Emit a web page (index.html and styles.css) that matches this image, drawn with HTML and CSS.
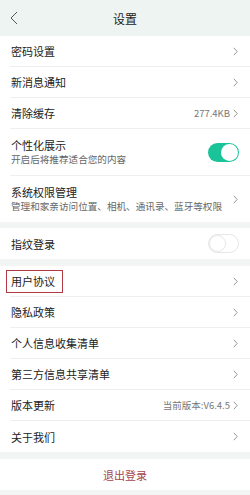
FILE: index.html
```html
<!DOCTYPE html>
<html lang="zh">
<head>
<meta charset="utf-8">
<link rel="stylesheet" href="styles.css">
</head>
<body>
<div class="page">
  <header class="topbar">
    <svg class="back" width="8" height="14" viewBox="0 0 8 14"><path d="M7 1 L1 7 L7 13" fill="none" stroke="#555" stroke-width="1"/></svg>
    <div class="title">设置</div>
  </header>

  <section class="group">
    <div class="row"><span class="label">密码设置</span><svg class="chev" width="5" height="9" viewBox="0 0 5 9"><path d="M0.8 0.8 L4.2 4.5 L0.8 8.2" fill="none" stroke="#8a8a8a" stroke-width="0.9"/></svg></div>
    <div class="row"><span class="label">新消息通知</span><svg class="chev" width="5" height="9" viewBox="0 0 5 9"><path d="M0.8 0.8 L4.2 4.5 L0.8 8.2" fill="none" stroke="#8a8a8a" stroke-width="0.9"/></svg></div>
    <div class="row"><span class="label">清除缓存</span><span class="right"><span class="value">277.4KB</span><svg class="chev" width="5" height="9" viewBox="0 0 5 9"><path d="M0.8 0.8 L4.2 4.5 L0.8 8.2" fill="none" stroke="#8a8a8a" stroke-width="0.9"/></svg></span></div>
    <div class="row tall"><div class="texts"><span class="label">个性化展示</span><span class="sub">开启后将推荐适合您的内容</span></div><span class="toggle on"><span class="knob"></span></span></div>
    <div class="row tall last"><div class="texts"><span class="label">系统权限管理</span><span class="sub">管理和家亲访问位置、相机、通讯录、蓝牙等权限</span></div><svg class="chev" width="5" height="9" viewBox="0 0 5 9"><path d="M0.8 0.8 L4.2 4.5 L0.8 8.2" fill="none" stroke="#8a8a8a" stroke-width="0.9"/></svg></div>
  </section>

  <div class="gap g6"></div>

  <section class="group">
    <div class="row last"><span class="label">指纹登录</span><span class="toggle off"><span class="knob"></span></span></div>
  </section>

  <div class="gap g7"></div>

  <section class="group">
    <div class="row"><span class="label marked">用户协议<span class="mark"></span></span><svg class="chev" width="5" height="9" viewBox="0 0 5 9"><path d="M0.8 0.8 L4.2 4.5 L0.8 8.2" fill="none" stroke="#8a8a8a" stroke-width="0.9"/></svg></div>
    <div class="row"><span class="label">隐私政策</span><svg class="chev" width="5" height="9" viewBox="0 0 5 9"><path d="M0.8 0.8 L4.2 4.5 L0.8 8.2" fill="none" stroke="#8a8a8a" stroke-width="0.9"/></svg></div>
    <div class="row"><span class="label">个人信息收集清单</span><svg class="chev" width="5" height="9" viewBox="0 0 5 9"><path d="M0.8 0.8 L4.2 4.5 L0.8 8.2" fill="none" stroke="#8a8a8a" stroke-width="0.9"/></svg></div>
    <div class="row"><span class="label">第三方信息共享清单</span><svg class="chev" width="5" height="9" viewBox="0 0 5 9"><path d="M0.8 0.8 L4.2 4.5 L0.8 8.2" fill="none" stroke="#8a8a8a" stroke-width="0.9"/></svg></div>
    <div class="row"><span class="label">版本更新</span><span class="right"><span class="value">当前版本:V6.4.5</span><svg class="chev" width="5" height="9" viewBox="0 0 5 9"><path d="M0.8 0.8 L4.2 4.5 L0.8 8.2" fill="none" stroke="#8a8a8a" stroke-width="0.9"/></svg></span></div>
    <div class="row last"><span class="label">关于我们</span><svg class="chev" width="5" height="9" viewBox="0 0 5 9"><path d="M0.8 0.8 L4.2 4.5 L0.8 8.2" fill="none" stroke="#8a8a8a" stroke-width="0.9"/></svg></div>
  </section>

  <div class="gap g7"></div>

  <section class="group">
    <div class="logout">退出登录</div>
  </section>
</div>
</body>
</html>
```

FILE: styles.css
```css
* { box-sizing: border-box; margin: 0; padding: 0; }
html, body { width: 250px; height: 495px; overflow: hidden; }
body {
  background: #f2f5f4;
  font-family: "Noto Sans CJK SC", "Noto Sans", sans-serif;
  color: #222;
}
.page { display: flex; flex-direction: column; }
.topbar {
  height: 36px;
  background: #edf4f2;
  display: flex;
  align-items: center;
  justify-content: center;
  position: relative;
}
.back { position: absolute; left: 10px; top: 11px; }
.title { font-size: 12px; color: #222; }
.group { background: #fff; }
.row {
  height: 31px;
  margin-left: 10px;
  padding-right: 11px;
  padding-left: 1px;
  border-bottom: 1px solid #eeeeee;
  display: flex;
  align-items: center;
  justify-content: space-between;
}
.row.last { border-bottom: none; }
.row.tall { height: 47px; }
.row.tall.last { height: 46px; }
.texts { display: flex; flex-direction: column; gap: 1px; }
.label { font-size: 11px; line-height: 14px; color: #222; }
.sub { font-size: 9.6px; line-height: 13px; color: #666; white-space: nowrap; }
.right { display: flex; align-items: center; gap: 3px; }
.value { font-size: 9.5px; color: #777; }
.chev { display: block; flex: none; margin-right: 1px; }
.toggle {
  width: 31px; height: 19px;
  border-radius: 10px;
  position: relative;
  display: block;
}
.toggle.on { background: #1bc399; }
.toggle.off { background: #fff; border: 1px solid #e6e6e6; }
.knob {
  position: absolute;
  width: 17px; height: 17px;
  border-radius: 50%;
  background: #fff;
  top: 1px;
}
.toggle.on .knob { right: 1px; }
.toggle.off .knob { left: 0; top: 0; border: 1px solid #e6e6e6; }
.gap.g6 { height: 6px; }
.gap.g7 { height: 7px; }
.marked { position: relative; }
.mark {
  position: absolute;
  left: -5px; top: -4px;
  width: 57px; height: 23px;
  border: 1.5px solid #b23a44;
}
.logout {
  height: 31px;
  display: flex;
  align-items: center;
  justify-content: center;
  font-size: 11px;
  color: #a5464e;
}
```
